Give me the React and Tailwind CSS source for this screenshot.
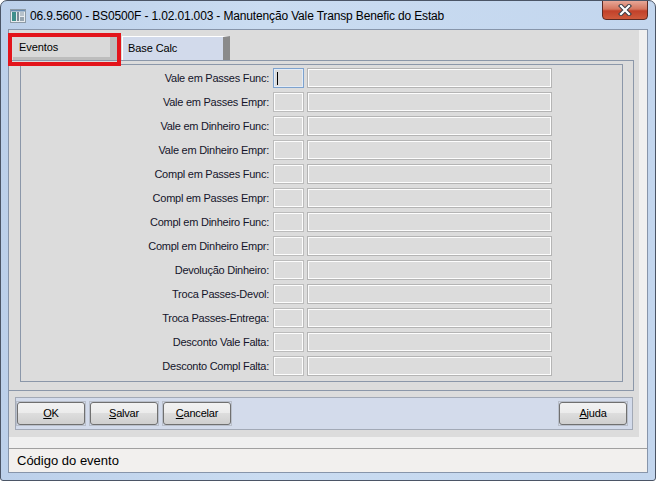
import React from 'react';

const rows = [
    'Vale em Passes Func:',
    'Vale em Passes Empr:',
    'Vale em Dinheiro Func:',
    'Vale em Dinheiro Empr:',
    'Compl em Passes Func:',
    'Compl em Passes Empr:',
    'Compl em Dinheiro Func:',
    'Compl em Dinheiro Empr:',
    'Devolução Dinheiro:',
    'Troca Passes-Devol:',
    'Troca Passes-Entrega:',
    'Desconto Vale Falta:',
    'Desconto Compl Falta:'
];

const WinButton = ({ hot, rest }) => (
    <div className="w-[70px] h-[25px] border border-[#b9bfca] flex">
        <div className="flex-1 border border-[#707070] rounded-[3px] bg-[linear-gradient(#f2f2f2_0%,#ebebeb_50%,#dddddd_50%,#cfcfcf_100%)] flex items-center justify-center text-[11px] tracking-[-0.2px] text-black">
            <span><span className="underline">{hot}</span>{rest}</span>
        </div>
    </div>
);

const AppIcon = () => (
    <svg width="16" height="14" viewBox="0 0 16 14">
        <rect x="0.5" y="0.5" width="15" height="13" fill="#e8ecef" stroke="#8c9aa6" />
        <rect x="2" y="3" width="4" height="9" fill="#3f8f8c" />
        <rect x="7" y="3" width="2" height="9" fill="#7a8a96" />
        <rect x="10" y="3" width="4" height="4" fill="#b7c2cb" />
        <rect x="10" y="8" width="4" height="4" fill="#97a5b0" />
        <rect x="1" y="1" width="14" height="1.5" fill="#6b8db0" />
    </svg>
);

const CloseGlyph = () => (
    <svg width="14" height="12" viewBox="0 0 14 12">
        <path d="M3 2 L11 10 M11 2 L3 10" stroke="#3b3f47" strokeWidth="4.2" strokeLinecap="square" />
        <path d="M3 2 L11 10 M11 2 L3 10" stroke="#ffffff" strokeWidth="2.2" strokeLinecap="square" />
    </svg>
);

export default function App() {
    return (
        <div className="relative w-[656px] h-[481px] flex flex-col border border-[#4b5566] rounded-t-[7px] rounded-b-[3px] overflow-hidden bg-[linear-gradient(90deg,#bcd0ea_0%,#cadcf1_40%,#c3d6ee_100%)] font-['Liberation_Sans',Arial,sans-serif]">
            {/* Title bar */}
            <div className="h-[28px] flex items-center pl-[9px] pt-[2px] relative">
                <AppIcon />
                <span className="ml-[4px] text-[12px] text-black tracking-[-0.15px]">
                    06.9.5600 - BS0500F - 1.02.01.003 - Manutenção Vale Transp Benefic do Estab
                </span>
                <div className="absolute top-[-1px] left-[601px] w-[46px] h-[20px] rounded-b-[4px] border border-[#5b2a24] bg-[linear-gradient(#e7a797_0%,#d4765f_45%,#c2412a_55%,#cf5a3c_100%)] flex items-center justify-center">
                    <CloseGlyph />
                </div>
            </div>

            {/* Frame body */}
            <div className="flex-1 flex px-[7px] pb-[7px]">
                <div className="flex-1 flex flex-col border border-[#8795aa]">
                    <div className="h-[418px] bg-[#f0f0f0] flex">
                        <div className="w-[630px] h-[407px] bg-[#dcdcdc] flex flex-col">
                            {/* Tab control */}
                            <div className="mt-[6px] w-[625px] flex flex-col">
                                <div className="h-[24px] flex items-end pl-[4px] gap-[5px]">
                                    <div className="w-[104px] h-[25px] bg-[#d9d9d9] border-r-[7px] border-b-[3px] border-[#bdbdbd] flex items-center pl-[6px] pt-[3px] text-[11px] text-black tracking-[-0.1px]">
                                        Eventos
                                    </div>
                                    <div className="w-[108px] h-[24px] bg-[#d2daeb] border-t border-l border-white border-r-[7px] border-r-[#8a8a8a] flex items-center pl-[5px] text-[11px] text-black tracking-[-0.1px]">
                                        Base Calc
                                    </div>
                                </div>
                                <div className="h-[331px] border-t border-r border-b border-[#8b97a9]">
                                    <div className="ml-[11px] mt-[3px] w-[603px] h-[318px] border border-[#8b97a9] pt-[3px] flex flex-col gap-[4px]">
                                        {rows.map((label, i) => (
                                            <div key={label} className="h-[20px] flex items-center">
                                                <div className="w-[248px] text-right text-[11px] tracking-[-0.25px] text-[#14142a]">
                                                    {label}
                                                </div>
                                                <div className={`ml-[4px] w-[31px] h-[20px] border bg-[#dcdcdc] flex items-center ${
                                                    i === 0
                                                        ? 'border-[#7da2ce] shadow-[inset_0_0_0_1px_#e4ecf6]'
                                                        : 'border-[#bcbcbc] shadow-[inset_0_0_0_1px_#fdfdfd]'
                                                }`}>
                                                    {i === 0 && <div className="ml-[3px] w-[1px] h-[13px] bg-black" />}
                                                </div>
                                                <div className="ml-[3px] w-[245px] h-[20px] border border-[#b4b4b4] shadow-[inset_0_0_0_1px_#fdfdfd] bg-[#dcdcdc]" />
                                            </div>
                                        ))}
                                    </div>
                                </div>
                            </div>

                            {/* Button panel */}
                            <div className="mt-[6px] ml-[6px] w-[618px] h-[33px] border border-[#a2a9b6] bg-[#d3dbeb] flex items-center gap-[3px] pr-[4px]">
                                <WinButton hot="O" rest="K" />
                                <WinButton hot="S" rest="alvar" />
                                <WinButton hot="C" rest="ancelar" />
                                <div className="ml-auto">
                                    <WinButton hot="A" rest="juda" />
                                </div>
                            </div>
                        </div>
                    </div>

                    {/* Status bar */}
                    <div className="flex-1 border-t border-[#a0a0a0] bg-[#f2f0ee] flex items-center pl-[8px] text-[13px] text-black">
                        Código do evento
                    </div>
                </div>
            </div>

            {/* Highlight box */}
            <div className="absolute left-[7px] top-[32px] w-[113px] h-[33px] border-[4px] border-[#e3141b]" />
        </div>
    );
}
